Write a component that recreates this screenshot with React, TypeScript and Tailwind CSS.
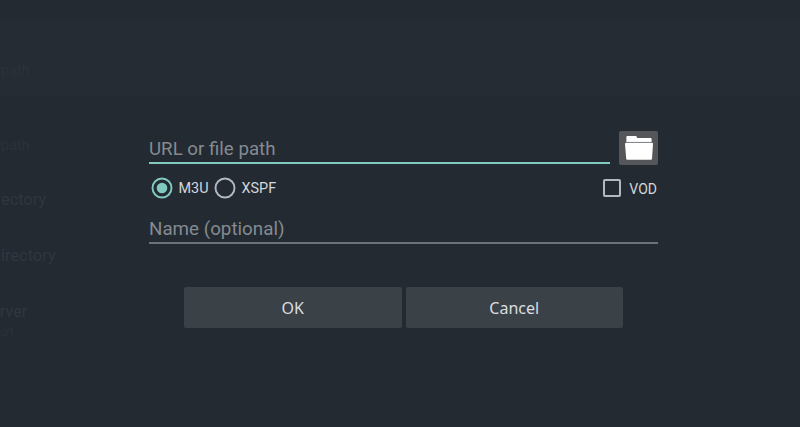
import { useState, type ReactElement } from "react";

interface RadioProps {
  label: string;
  checked: boolean;
  onSelect: () => void;
  className: string;
}

function Radio({
  label,
  checked,
  onSelect,
  className,
}: Readonly<RadioProps>): ReactElement {
  return (
    <label className={`flex items-center text-[14.4px] leading-5 text-[#d3d7dc] ${className}`}>
      <input
        type="radio"
        name="format"
        className="sr-only"
        checked={checked}
        onChange={onSelect}
      />
      <svg viewBox="0 0 22 22" className="mr-1.5 size-[22px] shrink-0" fill="none">
        <circle
          cx="11"
          cy="11"
          r="9.5"
          stroke={checked ? "#80cbc0" : "#b4b8c2"}
          strokeWidth="1.9"
        />
        {checked && <circle cx="11" cy="11" r="5.3" fill="#80cbc0" />}
      </svg>
      <span className="pt-0.5">{label}</span>
    </label>
  );
}

// dimmed settings list behind the dialog
function SettingsList(): ReactElement {
  return (
    <div className="h-full pt-5 text-[#2f3740]">
      <div className="h-[76px] bg-[#252c34] pt-[41px]">
        <p className="pl-px text-[14.5px] leading-5 text-[#2b323a]">path</p>
      </div>
      <p className="mt-10 pl-px text-[14.5px] leading-5 text-[#2b323a]">path</p>
      <p className="mt-8 pl-px text-[16.4px] leading-6">ectory</p>
      <p className="mt-8 pl-px text-[16.4px] leading-6">irectory</p>
      <p className="mt-8 text-base leading-6">rver</p>
      <p className="text-xs leading-4 tracking-tighter text-[#2a3139]">ort</p>
    </div>
  );
}

export default function App(): ReactElement {
  const [format, setFormat] = useState("M3U");
  const [url, setUrl] = useState("");
  const [name, setName] = useState("");
  const [vod, setVod] = useState(false);

  return (
    <div className="relative h-[427px] w-[800px] overflow-hidden bg-[#232a32] font-['Roboto',sans-serif]">
      <SettingsList />

      <form
        className="absolute inset-0 pt-[131px] pl-[149px]"
        onSubmit={(e) => e.preventDefault()}
      >
        <div className="flex w-[509px] justify-between">
          <input
            aria-label="URL or file path"
            placeholder="URL or file path"
            value={url}
            onChange={(e) => setUrl(e.target.value)}
            className="h-[33px] w-[461px] border-b-2 border-[#80cbc0] pt-1 text-[18.7px] text-gray-200 outline-none placeholder:text-[#858a91]"
          />
          <button
            type="button"
            aria-label="Browse"
            className="flex h-[34px] w-[39px] items-center justify-center rounded-[2px] bg-[#555659]"
          >
            <svg viewBox="0 0 30 26" className="h-[26px] w-[30px]" fill="#fff">
              <path d="M2.4 7V1.9Q2.4 1 3.3 1H11.8Q12.5 1 12.8 2L13.2 2.9H26.6Q27.6 2.9 27.6 3.9V7Z" />
              <path d="M1.6 8H28.6Q29.1 8 29 8.7L28 23.7Q27.9 24.7 26.9 24.7H3.3Q2.3 24.7 2.2 23.7L1 8.7Q1 8 1.6 8Z" />
              <path d="M1.8 7.4H28.2" stroke="#929396" strokeWidth="0.9" />
            </svg>
          </button>
        </div>

        <div className="mt-3 flex h-[22px] w-[509px] items-center pr-px pl-[1.5px]">
          <Radio
            label="M3U"
            checked={format === "M3U"}
            onSelect={() => setFormat("M3U")}
            className="w-[63px]"
          />
          <Radio
            label="XSPF"
            checked={format === "XSPF"}
            onSelect={() => setFormat("XSPF")}
            className=""
          />
          <label className="ml-auto flex items-center gap-2 text-sm leading-5 text-[#d3d7dc]">
            <input
              type="checkbox"
              className="sr-only"
              checked={vod}
              onChange={(e) => setVod(e.target.checked)}
            />
            <span className="size-[18px] rounded-[2px] border-2 border-[#b4b8c2]" />
            <span className="pt-px">VOD</span>
          </label>
        </div>

        <input
          aria-label="Name (optional)"
          placeholder="Name (optional)"
          value={name}
          onChange={(e) => setName(e.target.value)}
          className="mt-3 block h-[33px] w-[509px] border-b-2 border-[#6b727a] pt-1 text-[18.8px] text-gray-200 outline-none placeholder:text-[#858a91]"
        />

        <div className="mt-[43px] ml-[35px] flex gap-1 font-['Noto_Sans',sans-serif] text-base text-[#dadde0]">
          <button type="submit" className="h-[41px] w-[217.5px] rounded-[2px] bg-[#3a4147]">
            OK
          </button>
          <button type="button" className="h-[41px] w-[217.5px] rounded-[2px] bg-[#3a4147]">
            Cancel
          </button>
        </div>
      </form>
    </div>
  );
}
